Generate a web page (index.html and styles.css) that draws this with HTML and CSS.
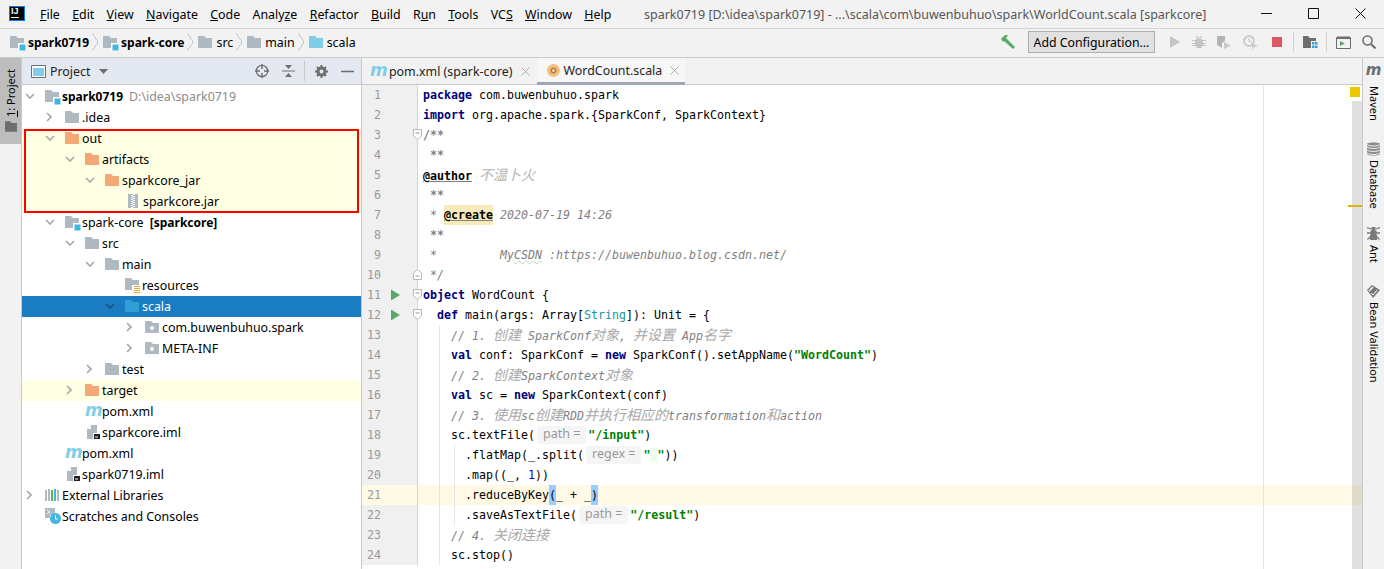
FILE: index.html
```html
<!DOCTYPE html>
<html lang="en">
<head>
    <meta charset="UTF-8">
    <title>WordCount.scala - spark0719</title>
    <link rel="stylesheet" href="styles.css">
</head>
<body>
    <svg class="defs" width="0" height="0">
        <symbol id="folder" viewBox="0 0 14 12"><path d="M0 0H6L8 2H14V12H0Z"/></symbol>
        <symbol id="module" viewBox="0 0 16 15">
            <path fill="#afb9c1" d="M0 0H6L8 2H14V12H0Z"/>
            <path fill="#fff" d="M8 7H16V15H8Z"/>
            <path fill="#40b6e0" d="M9.500 8.500H15.500V14.500H9.500Z"/>
        </symbol>
        <symbol id="down" viewBox="0 0 10 6"><path d="M1 1L5 5L9 1" fill="none" stroke-width="1.600"/></symbol>
        <symbol id="right" viewBox="0 0 6 10"><path d="M1 1L5 5L1 9" fill="none" stroke-width="1.600"/></symbol>
        <symbol id="iml" viewBox="0 0 14 15">
            <path fill="#afb9c1" d="M4 0H10V14H0V4Z"/>
            <path fill="#fff" d="M4 0V4H0Z"/>
            <path fill="#fff" d="M6 8H14V15H6Z"/>
            <path fill="#231f20" d="M7 9H13V14H7Z"/>
            <path fill="#fff" d="M8 11.500H11V12.500H8Z"/>
        </symbol>
        <symbol id="run" viewBox="0 0 10 12"><path d="M0 0L10 6L0 12Z"/></symbol>
        <symbol id="fold-open" viewBox="0 0 9 11"><path fill="#fff" stroke="#b8b8b8" d="M.5.500H8.500V7L4.500 10.500L.5 7Z"/><path stroke="#999" d="M2.500 4H6.500"/></symbol>
        <symbol id="fold-end" viewBox="0 0 9 11"><path fill="#fff" stroke="#b8b8b8" d="M.5 10.500H8.500V4L4.500 .5L.5 4Z"/><path stroke="#999" d="M2.500 7H6.500"/></symbol>
        <symbol id="close" viewBox="0 0 9 9"><path d="M.5.500L8.500 8.500M8.500.5L.5 8.500" fill="none"/></symbol>
    </svg>

    <div class="titlebar">
        <div class="app-logo"><span>IJ</span></div>
        <div class="menu">
            <span><u>F</u>ile</span>
            <span><u>E</u>dit</span>
            <span><u>V</u>iew</span>
            <span><u>N</u>avigate</span>
            <span><u>C</u>ode</span>
            <span>Analy<u>z</u>e</span>
            <span><u>R</u>efactor</span>
            <span><u>B</u>uild</span>
            <span>R<u>u</u>n</span>
            <span><u>T</u>ools</span>
            <span>VC<u>S</u></span>
            <span><u>W</u>indow</span>
            <span><u>H</u>elp</span>
        </div>
        <div class="window-title">spark0719 [D:\idea\spark0719] - ...\scala\com\buwenbuhuo\spark\WorldCount.scala [sparkcore]</div>
        <div class="window-btns">
            <svg width="11" height="11" viewBox="0 0 11 11"><path d="M0 5.500H11" stroke="#111"/></svg>
            <svg width="11" height="11" viewBox="0 0 11 11"><path d="M.5.500H10.500V10.500H.5Z" fill="none" stroke="#111"/></svg>
            <svg width="11" height="11" viewBox="0 0 11 11"><path d="M.5.500L10.500 10.500M10.500.5L.5 10.500" fill="none" stroke="#111"/></svg>
        </div>
    </div>

    <div class="navbar">
        <div class="crumbs">
            <svg class="ico-mod"><use href="#module"/></svg><b>spark0719</b><i class="sep"></i>
            <svg class="ico-mod"><use href="#module"/></svg><b>spark-core</b><i class="sep"></i>
            <svg class="ico gray"><use href="#folder"/></svg><span>src</span><i class="sep"></i>
            <svg class="ico gray"><use href="#folder"/></svg><span>main</span><i class="sep"></i>
            <svg class="ico blue"><use href="#folder"/></svg><span>scala</span>
        </div>
        <div class="tools">
            <svg class="t-hammer" width="16" height="14" viewBox="0 0 16 14"><path d="M1 4L5 0H8L6 3L15 12L13 14L4 6L3 7Z" fill="#59a869"/></svg>
            <button class="config">Add Configuration...</button>
            <svg class="t-play" width="12" height="14" viewBox="0 0 12 14"><path d="M1 1L11 7L1 13Z" fill="#c4c4c4"/></svg>
            <svg class="t-bug" width="14" height="14" viewBox="0 0 14 14"><path d="M4 4H10V5H14V6H11V8H14V9H11V10H14V11H10L9 13H5L4 11H0V10H3V9H0V8H3V6H0V5H4ZM5 1L7 3L9 1L10 2L9 3.500H5L4 2Z" fill="#c4c4c4"/></svg>
            <svg class="t-cover" width="15" height="14" viewBox="0 0 15 14"><path d="M0 1H8V6L5 8V13L0 10Z" fill="#b4b4b4"/><path d="M7 7L14 10.500L7 14Z" fill="#c8c8c8"/></svg>
            <svg class="t-prof" width="15" height="15" viewBox="0 0 15 15"><circle cx="6" cy="6" r="5" fill="none" stroke="#c0c0c0" stroke-width="1.500"/><path d="M6 3V6.500H9" fill="none" stroke="#c0c0c0"/><path d="M8 8L15 11L11 12L10 15Z" fill="#c8c8c8"/></svg>
            <span class="t-stop"></span>
            <span class="t-sep"></span>
            <svg class="t-struct" width="15" height="14" viewBox="0 0 15 14"><path d="M0 1H5L7 3H13V6H8V13H0Z" fill="#6e6e6e"/><path d="M9 7H11.500V9.500H9ZM12 7H14.500V9.500H12ZM9 10.500H11.500V13H9ZM12 10.500H14.500V13H12Z" fill="#389fd6"/></svg>
            <span class="t-sep"></span>
            <svg class="t-term" width="15" height="13" viewBox="0 0 15 13"><path d="M.5 1.500H14.500V12.500H.5Z" fill="none" stroke="#6e6e6e"/><path d="M1 .5H14V3H1Z" fill="#6e6e6e"/><path d="M4 5L9 7.500L4 10Z" fill="#59a869"/></svg>
            <svg class="t-search" width="14" height="14" viewBox="0 0 14 14"><circle cx="5.500" cy="5.500" r="4.500" fill="none" stroke="#6e6e6e" stroke-width="1.600"/><path d="M9 9L13.500 13.500" stroke="#6e6e6e" stroke-width="2"/></svg>
        </div>
    </div>

    <div class="workspace">
        <div class="strip strip-left">
            <div class="strip-tab">
                <span class="vtext"><u>1</u>: Project</span>
                <svg class="strip-folder" width="12" height="11" viewBox="0 0 14 12"><path d="M0 0H6L8 2H14V12H0Z" fill="#6e6e6e"/></svg>
            </div>
        </div>

        <div class="project">
            <div class="project-head">
                <svg class="head-ico" width="15" height="13" viewBox="0 0 15 13"><path d="M.5.500H14.500V12.500H.5Z" fill="#fff" stroke="#6e6e6e"/><path d="M2 3H13V11H2Z" fill="#7fcde8"/></svg>
                <span class="head-title">Project</span>
                <svg class="head-caret" width="9" height="5" viewBox="0 0 9 5"><path d="M0 0H9L4.500 5Z" fill="#6e6e6e"/></svg>
                <div class="head-tools">
                    <svg width="14" height="14" viewBox="0 0 14 14"><circle cx="7" cy="7" r="5.700" fill="none" stroke="#6e6e6e" stroke-width="1.300"/><path d="M7 0V5M7 9V14M0 7H5M9 7H14" stroke="#6e6e6e" stroke-width="1.500"/></svg>
                    <svg width="13" height="14" viewBox="0 0 13 14"><path d="M0 7H13" stroke="#6e6e6e"/><path d="M3 1H10L6.500 5ZM3 13H10L6.500 9Z" fill="#6e6e6e"/></svg>
                    <span class="head-sep"></span>
                    <svg width="13" height="13" viewBox="0 0 13 13"><circle cx="6.500" cy="6.500" r="3.500" fill="none" stroke="#6e6e6e" stroke-width="3"/><path d="M6.500 0V3M6.500 10V13M0 6.500H3M10 6.500H13M2 2L4 4M9 9L11 11M11 2L9 4M4 9L2 11" stroke="#6e6e6e" stroke-width="2"/></svg>
                    <svg width="13" height="13" viewBox="0 0 13 13"><path d="M0 6.500H13" stroke="#6e6e6e" stroke-width="1.500"/></svg>
                </div>
            </div>

            <div class="tree">
                <div class="row lv0"><svg class="arr"><use href="#down"/></svg><svg class="ico-mod"><use href="#module"/></svg><b>spark0719</b><span class="path">D:\idea\spark0719</span></div>
                <div class="row lv1"><svg class="arr-r"><use href="#right"/></svg><svg class="ico gray"><use href="#folder"/></svg><span>.idea</span></div>
                <div class="excluded">
                    <div class="row lv1"><svg class="arr"><use href="#down"/></svg><svg class="ico orange"><use href="#folder"/></svg><span>out</span></div>
                    <div class="row lv2"><svg class="arr"><use href="#down"/></svg><svg class="ico orange"><use href="#folder"/></svg><span>artifacts</span></div>
                    <div class="row lv3"><svg class="arr"><use href="#down"/></svg><svg class="ico orange"><use href="#folder"/></svg><span>sparkcore_jar</span></div>
                    <div class="row lv4"><i class="arr-none"></i>
                        <svg class="ico-jar" width="10" height="14" viewBox="0 0 10 14"><path d="M0 0H10V14H0Z" fill="#afb9c1"/><path d="M5 0H7V1H5ZM3 1H5V2H3ZM5 2H7V3H5ZM3 3H5V4H3ZM5 4H7V5H5ZM3 5H5V6H3ZM5 6H7V7H5ZM3 7H5V8H3ZM5 8H7V9H5ZM3 9H5V10H3ZM5 10H7V11H5ZM3 11H5V12H3ZM5 12H7V13H5ZM3 13H5V14H3Z" fill="#fff"/></svg>
                        <span>sparkcore.jar</span></div>
                </div>
                <div class="row lv1"><svg class="arr"><use href="#down"/></svg><svg class="ico-mod"><use href="#module"/></svg><span>spark-core <b class="facet">[sparkcore]</b></span></div>
                <div class="row lv2"><svg class="arr"><use href="#down"/></svg><svg class="ico gray"><use href="#folder"/></svg><span>src</span></div>
                <div class="row lv3"><svg class="arr"><use href="#down"/></svg><svg class="ico gray"><use href="#folder"/></svg><span>main</span></div>
                <div class="row lv4"><i class="arr-none"></i>
                    <svg class="ico-res" width="15" height="15" viewBox="0 0 15 15"><path d="M0 0H6L8 2H14V12H0Z" fill="#afb9c1"/><path d="M7 7H15V15H7Z" fill="#fff"/><path d="M9 8H15V9H9ZM9 10H15V11H9ZM9 12H15V13H9ZM9 14H15V15H9Z" fill="#f0a732"/></svg>
                    <span>resources</span></div>
                <div class="row lv4 selected"><svg class="arr dark"><use href="#down"/></svg><svg class="ico sel-blue"><use href="#folder"/></svg><span>scala</span></div>
                <div class="row lv5"><svg class="arr-r"><use href="#right"/></svg>
                    <svg class="ico gray pkg" viewBox="0 0 14 12"><path d="M0 0H6L8 2H14V12H0Z"/><circle cx="7" cy="7" r="2" fill="#fff"/></svg>
                    <span>com.buwenbuhuo.spark</span></div>
                <div class="row lv5"><svg class="arr-r"><use href="#right"/></svg>
                    <svg class="ico gray pkg" viewBox="0 0 14 12"><path d="M0 0H6L8 2H14V12H0Z"/><circle cx="7" cy="7" r="2" fill="#fff"/></svg>
                    <span>META-INF</span></div>
                <div class="row lv3"><svg class="arr-r"><use href="#right"/></svg><svg class="ico gray"><use href="#folder"/></svg><span>test</span></div>
                <div class="row lv2 excluded-row"><svg class="arr-r"><use href="#right"/></svg><svg class="ico orange"><use href="#folder"/></svg><span>target</span></div>
                <div class="row lv2"><i class="arr-none"></i><em class="m-ico">m</em><span>pom.xml</span></div>
                <div class="row lv2"><i class="arr-none"></i><svg class="ico-iml"><use href="#iml"/></svg><span>sparkcore.iml</span></div>
                <div class="row lv1"><i class="arr-none"></i><em class="m-ico">m</em><span>pom.xml</span></div>
                <div class="row lv1"><i class="arr-none"></i><svg class="ico-iml"><use href="#iml"/></svg><span>spark0719.iml</span></div>
                <div class="row lv0"><svg class="arr-r"><use href="#right"/></svg>
                    <svg class="ico-lib" width="15" height="12" viewBox="0 0 15 12"><path d="M0 1H2V12H0Z" fill="#afb9c1"/><path d="M3 0H5V12H3Z" fill="#afb9c1"/><path d="M6 1H8V12H6Z" fill="#62b543"/><path d="M9 0H11V12H9Z" fill="#40b6e0"/><path d="M12 1H14V12H12Z" fill="#afb9c1"/></svg>
                    <span>External Libraries</span></div>
                <div class="row lv0"><i class="arr-none arr-wide"></i>
                    <svg class="ico-scr" width="16" height="16" viewBox="0 0 16 16"><path d="M0 0H10V7H5V10H0Z" fill="#afb9c1"/><path d="M2 2L5 4L2 6" fill="none" stroke="#fff"/><circle cx="10.500" cy="10.500" r="5.500" fill="#40b6e0"/><path d="M10.500 7.500V11H13" fill="none" stroke="#fff"/></svg>
                    <span>Scratches and Consoles</span></div>
            </div>
        </div>

        <div class="editor">
            <div class="tabs">
                <div class="tab"><em class="m-ico">m</em><span>pom.xml (spark-core)</span><svg class="tab-x"><use href="#close"/></svg></div>
                <div class="tab active">
                    <svg class="scala-ico" width="13" height="13" viewBox="0 0 13 13"><circle cx="6.500" cy="6.500" r="6.500" fill="#f4bf75"/><circle cx="6.500" cy="6.500" r="2.500" fill="none" stroke="#6b6b6b"/></svg>
                    <span>WordCount.scala</span><svg class="tab-x"><use href="#close"/></svg></div>
            </div>
            <div class="code-area">
                <div class="line"><div class="gut"><span class="no">1</span></div><code><b class="kw">package</b> com.buwenbuhuo.spark</code></div>
                <div class="line"><div class="gut"><span class="no">2</span></div><code><b class="kw">import</b> org.apache.spark.{SparkConf, SparkContext}</code></div>
                <div class="line"><div class="gut"><span class="no">3</span><svg class="fold"><use href="#fold-open"/></svg></div><code class="doc"><b>/**</b></code></div>
                <div class="line"><div class="gut"><span class="no">4</span></div><code class="doc"><b> **</b></code></div>
                <div class="line"><div class="gut"><span class="no">5</span></div><code class="doc"><b class="tag">@author</b> <span class="cjk light">不温卜火</span></code></div>
                <div class="line"><div class="gut"><span class="no">6</span></div><code class="doc"><b> **</b></code></div>
                <div class="line"><div class="gut"><span class="no">7</span></div><code class="doc"> * <b class="tag todo">@create</b> 2020-07-19 14:26</code></div>
                <div class="line"><div class="gut"><span class="no">8</span></div><code class="doc"><b> **</b></code></div>
                <div class="line"><div class="gut"><span class="no">9</span></div><code class="doc"> *         My<span class="typo">CSDN</span> :https://buwenbuhuo.blog.csdn.net/</code></div>
                <div class="line"><div class="gut"><span class="no">10</span><svg class="fold"><use href="#fold-end"/></svg></div><code class="doc"> */</code></div>
                <div class="line"><div class="gut"><span class="no">11</span><svg class="gut-run"><use href="#run"/></svg><svg class="fold"><use href="#fold-open"/></svg></div><code><b class="kw">object</b> WordCount {</code></div>
                <div class="line"><div class="gut"><span class="no">12</span><svg class="gut-run"><use href="#run"/></svg><svg class="fold"><use href="#fold-open"/></svg></div><code>  <b class="kw">def</b> main(args: Array[<span class="type">String</span>]): Unit = {</code></div>
                <div class="line"><div class="gut"><span class="no">13</span></div><code class="cmt">    // 1. <span class="cjk">创建</span> SparkConf<span class="cjk">对象</span>, <span class="cjk">并设置</span> App<span class="cjk">名字</span></code></div>
                <div class="line"><div class="gut"><span class="no">14</span></div><code>    <b class="kw">val</b> conf: SparkConf = <b class="kw">new</b> SparkConf().setAppName(<b class="str">"WordCount"</b>)</code></div>
                <div class="line"><div class="gut"><span class="no">15</span></div><code class="cmt">    // 2. <span class="cjk">创建</span>SparkContext<span class="cjk">对象</span></code></div>
                <div class="line"><div class="gut"><span class="no">16</span></div><code>    <b class="kw">val</b> sc = <b class="kw">new</b> SparkContext(conf)</code></div>
                <div class="line"><div class="gut"><span class="no">17</span></div><code class="cmt">    // 3. <span class="cjk">使用</span>sc<span class="cjk">创建</span>RDD<span class="cjk">并执行相应的</span>transformation<span class="cjk">和</span>action</code></div>
                <div class="line"><div class="gut"><span class="no">18</span></div><code>    sc.textFile(<span class="hint">path =</span><b class="str">"/input"</b>)</code></div>
                <div class="line"><div class="gut"><span class="no">19</span></div><code>      .flatMap(_.split(<span class="hint">regex =</span><b class="str">"<span class="esc"> </span>"</b>))</code></div>
                <div class="line"><div class="gut"><span class="no">20</span></div><code>      .map((_, <span class="num">1</span>))</code></div>
                <div class="line current"><div class="gut"><span class="no">21</span></div><code>      .reduceByKey<span class="brace">(</span>_ + _<span class="brace">)</span></code></div>
                <div class="line"><div class="gut"><span class="no">22</span></div><code>      .saveAsTextFile(<span class="hint">path =</span><b class="str">"/result"</b>)</code></div>
                <div class="line"><div class="gut"><span class="no">23</span></div><code class="cmt">    // 4. <span class="cjk">关闭连接</span></code></div>
                <div class="line"><div class="gut"><span class="no">24</span></div><code>    sc.stop()</code></div>

                <!-- overlays on the text area -->
                <span class="guide guide-a"></span>
                <span class="guide guide-b"></span>
                <span class="margin-line"></span>
                <span class="scroll-track"></span>
                <span class="err-box"></span>
                <span class="err-mark"></span>
            </div>
        </div>

        <div class="strip strip-right">
            <em class="m-side">m</em>
            <span class="vtext maven">Maven</span>
            <svg class="side-ico side-db" width="13" height="14" viewBox="0 0 13 14"><path d="M0 2C0 0 13 0 13 2V12C13 14 0 14 0 12Z" fill="#8c8c8c"/><path d="M0 5C3 7 10 7 13 5M0 8C3 10 10 10 13 8M0 11C3 13 10 13 13 11M0 2.500C3 4.500 10 4.500 13 2.500" fill="none" stroke="#f2f2f2"/></svg>
            <span class="vtext">Database</span>
            <svg class="side-ico side-ant" width="13" height="13" viewBox="0 0 13 13"><path d="M4.500 0H8.500V3.500H4.500ZM3.500 3.500H9.500V8H3.500ZM3 8H10V13H3Z" fill="#7a7a7a"/><path d="M4 2L0 .5M9 2L13 .5M4 6H0M9 6H13M4 9L.5 12.500M9 9L12.500 12.500" stroke="#7a7a7a" stroke-width="1.300"/></svg>
            <span class="vtext">Ant</span>
            <svg class="side-ico side-bean" width="13" height="13" viewBox="0 0 13 13"><path d="M0 5L5 0L13 5L6 13Z" fill="#777"/><path d="M2 6L6 2" stroke="#fff" stroke-width="1.500"/><path d="M4 8L6 10L10 5" fill="none" stroke="#fff"/></svg>
            <span class="vtext">Bean Validation</span>
        </div>
    </div>
</body>
</html>
```

FILE: styles.css
```css
* {
    box-sizing: border-box;
}

html, body {
    margin: 0;
    height: 569px;
    overflow: hidden;
}

body {
    font-family: "Noto Sans", "Noto Sans CJK SC", sans-serif;
    font-size: 12.4px;
    color: #000;
    background-color: #f2f2f2;
}

b {
    font-size: 12px;
}

.defs {
    position: absolute;
}

svg {
    flex: none;
    display: block;
}

/* Title bar */
.titlebar {
    display: flex;
    align-items: center;
    height: 29px;
    padding-left: 9px;
    border-bottom: 1px solid #d4d4d4;
}

.app-logo {
    width: 16px;
    height: 15px;
    margin-top: -2px;
    background-color: #000;
    border: 1px solid #087cfa;
    color: #fff;
    font: bold 9px/9px "Liberation Sans", sans-serif;
    padding-left: 1px;
}

.app-logo span {
    display: block;
    width: 8px;
    height: 11px;
    border-bottom: 1px solid #fff;
}

.menu {
    display: flex;
    gap: 12.3px;
    margin-left: 15px;
}

.window-title {
    position: absolute;
    left: 644px;
    top: 6px;
    font-size: 12.5px;
    color: #555;
}

.window-btns {
    display: flex;
    gap: 36px;
    margin-left: auto;
    margin-right: 18px;
    margin-top: -1px;
}

/* Navigation bar */
.navbar {
    display: flex;
    align-items: center;
    height: 29px;
    padding: 0 0 2px 10px;
    border-bottom: 1px solid #c9c9c9;
}

.crumbs {
    display: flex;
    align-items: center;
}

.crumbs .ico-mod {
    margin-right: 2px;
}

.crumbs .ico {
    margin-right: 4px;
}

.sep {
    width: 6px;
    height: 18px;
    margin: 0 5px 0 3px;
    background: linear-gradient(to top right, transparent 47%, #c8c8c8 47%, #c8c8c8 56%, transparent 56%) top / 100% 50% no-repeat,
                linear-gradient(to bottom right, transparent 47%, #c8c8c8 47%, #c8c8c8 56%, transparent 56%) bottom / 100% 50% no-repeat;
}

.tools {
    display: flex;
    align-items: center;
    margin-left: auto;
    margin-right: 8px;
}

.config {
    width: 127px;
    height: 22px;
    margin: 0 14px 0 1px;
    padding: 0;
    background-color: #e1e1e1;
    border: 1px solid #adadad;
    font: 12.3px "Noto Sans", sans-serif;
    color: #000;
}

.tools svg {
    margin-right: 11px;
}

.tools .t-struct {
    margin-right: 8px;
}

.t-stop {
    width: 10px;
    height: 10px;
    margin: 0 11px 0 3px;
    background-color: #db5860;
}

.t-sep {
    width: 1px;
    height: 20px;
    margin-right: 9px;
    background-color: #d1d1d1;
}

.tools .t-search {
    margin-right: 0;
}

/* Main area */
.workspace {
    display: flex;
    height: 511px;
}

.strip {
    flex: none;
    width: 22px;
}

.strip-left {
    border-right: 1px solid #c9c9c9;
}

.strip-right {
    display: flex;
    flex-direction: column;
    align-items: center;
    padding-top: 6px;
    border-left: 1px solid #c9c9c9;
    font-size: 11px;
}

.vtext {
    writing-mode: vertical-rl;
    line-height: 16px;
}

.strip-tab {
    display: flex;
    flex-direction: column;
    align-items: center;
    height: 86px;
    padding-top: 11px;
    background-color: #bdbdbd;
    font-size: 11px;
}

.strip-tab .vtext {
    transform: rotate(180deg);
}

.strip-folder {
    margin-top: 4px;
}

.m-side {
    font: italic bold 15px/13px "DejaVu Sans", sans-serif;
    color: #6e6e6e;
}

.maven {
    margin-top: 9px;
}

.side-db {
    margin: 21px 0 4px;
}

.side-ant {
    margin: 18px 0 5px;
}

.side-bean {
    margin: 23px 0 4px;
}

/* Project panel */
.project {
    flex: none;
    width: 340px;
    background-color: #fff;
    border-right: 1px solid #c9c9c9;
}

.project-head {
    display: flex;
    align-items: center;
    height: 27px;
    padding-left: 9px;
    background-color: #e4e8f0;
    border-bottom: 1px solid #c9c9c9;
}

.head-title {
    margin-left: 4px;
    color: #222;
}

.head-caret {
    margin-left: 9px;
}

.head-tools {
    display: flex;
    align-items: center;
    gap: 13px;
    margin-left: auto;
    margin-right: 7px;
}

.head-sep {
    width: 1px;
    height: 20px;
    margin: 0 -3px 0 -4px;
    background-color: #c9c9c9;
}

.tree {
    padding-top: 1px;
}

.row {
    display: flex;
    align-items: center;
    height: 21px;
    padding-bottom: 1px;
    white-space: nowrap;
}

.lv0 { padding-left: 4px; }
.lv1 { padding-left: 24px; }
.lv2 { padding-left: 44px; }
.lv3 { padding-left: 64px; }
.lv4 { padding-left: 84px; }
.lv5 { padding-left: 104px; }

.arr {
    width: 10px;
    height: 6px;
    margin: 0 10px 0 -1px;
    stroke: #a3a8ad;
}

.arr.dark {
    stroke: #1d4f77;
}

.arr-r {
    width: 6px;
    height: 10px;
    margin: 0 13px 0 0;
    stroke: #a3a8ad;
}

.arr-none {
    width: 19px;
    flex: none;
}

.ico {
    width: 14px;
    height: 12px;
    margin-right: 3px;
}

.pkg {
    margin-right: 3px;
}

.gray { fill: #afb9c1; }
.blue { fill: #7fcde8; }
.orange { fill: #f4a876; }
.sel-blue { fill: #2f9fd6; }

.ico-mod {
    width: 16px;
    height: 15px;
    margin-right: 1px;
    margin-top: 2px;
}

.ico-jar {
    margin: 0 5px 0 3px;
}

.ico-res {
    margin-right: 2px;
}

.ico-iml {
    width: 14px;
    height: 15px;
    margin: 0 1px 0 2px;
}

.ico-lib {
    margin-right: 2px;
}

.ico-scr {
    margin-right: 1px;
}

.path {
    margin-left: 6px;
    color: #8c8c8c;
}

.facet {
    margin-left: 3px;
}

.excluded, .excluded-row {
    background-color: #ffffe4;
}

.excluded {
    position: relative;
}

/* red annotation round the out folder */
.excluded::after {
    content: "";
    position: absolute;
    left: 2px;
    right: 2px;
    top: 1px;
    bottom: -1px;
    border: 2px solid #f00;
}

.selected {
    background-color: #1a7dc4;
    color: #fff;
}

.m-ico {
    width: 17px;
    flex: none;
    font: italic bold 17px/16px "DejaVu Sans", sans-serif;
    color: #7fcde8;
    letter-spacing: -1px;
    margin-top: -3px;
}

/* Editor */
.editor {
    flex: none;
    width: 1000px;
    display: flex;
    flex-direction: column;
}

.tabs {
    display: flex;
    height: 27px;
    border-bottom: 1px solid #c9c9c9;
}

.tab {
    display: flex;
    align-items: center;
    padding: 0 7px 0 8px;
    color: #222;
}

.tab .m-ico {
    margin-top: -3px;
    margin-right: 2px;
}

.tab-x {
    width: 9px;
    height: 9px;
    margin-left: 8px;
    stroke: #b0b0b0;
}

.tab.active {
    height: 27px;
    padding: 0 6px 0 10px;
    background-color: #f7f7f7;
    border-bottom: 3px solid #9ca7b8;
}

.scala-ico {
    margin-right: 4px;
    margin-top: 1px;
}

.code-area {
    position: relative;
    flex: 1;
    background-color: #fff;
    overflow: hidden;
}

.line {
    display: flex;
    height: 20px;
    font: 11.63px/20px "DejaVu Sans Mono", monospace;
}

.line b {
    font-size: inherit;
}

.gut {
    position: relative;
    flex: none;
    width: 56px;
    background-color: #f0f0f0;
    border-right: 1px solid #d5d5d5;
}

.no {
    display: block;
    width: 19px;
    text-align: right;
    color: #999;
}

.gut-run {
    position: absolute;
    left: 29px;
    top: 4px;
    width: 9px;
    height: 12px;
    fill: #59a869;
}

.fold {
    position: absolute;
    left: 51px;
    top: 4px;
    width: 9px;
    height: 11px;
}

code {
    flex: 1;
    padding-left: 5px;
    font: inherit;
    color: #000;
    white-space: pre;
}

.kw {
    color: #000080;
}

.str {
    color: #008000;
}

.esc {
    background-color: #edfced;
}

.num {
    color: #0000ff;
}

.type {
    color: #20999d;
}

.cmt {
    color: #808080;
    font-style: italic;
}

.doc {
    color: #808080;
    font-style: italic;
}

.doc b {
    font-style: normal;
}

.tag {
    color: #000;
    text-decoration: underline;
    text-decoration-color: #808080;
}

.todo {
    background-color: #f7ebbb;
    display: inline-block;
    height: 20px;
}

.typo {
    text-decoration: underline wavy #b5d9b5;
    text-decoration-thickness: 1px;
}

.cjk {
    font-family: "Noto Sans CJK SC", sans-serif;
    font-size: 14px;
    line-height: 18px;
    color: #a8a8a8;
}

.light {
    color: #b4b4b4;
}

.hint {
    display: inline-block;
    height: 18px;
    margin: 0 2px;
    padding: 0 6px;
    background-color: #f5f5f5;
    border-radius: 4px;
    color: #999;
    font: 12.5px/16px "Noto Sans", sans-serif;
    vertical-align: 1px;
}

.current {
    background-color: #fff9e5;
}

.current .gut {
    background-color: #fff9e5;
}

.brace {
    background-color: #99ccff;
    display: inline-block;
    height: 20px;
}

.guide {
    position: absolute;
    width: 1px;
    background-color: #e4e4e4;
}

.guide-a {
    left: 77px;
    top: 240px;
    height: 240px;
}

.guide-b {
    left: 92px;
    top: 360px;
    height: 80px;
}

.margin-line {
    position: absolute;
    left: 901px;
    top: 0;
    bottom: 0;
    width: 1px;
    background-color: #e4e4e4;
}

.scroll-track {
    position: absolute;
    left: 990px;
    top: 16px;
    bottom: 0;
    width: 10px;
    background-color: rgba(0, 0, 0, 0.12);
}

.err-box {
    position: absolute;
    left: 988px;
    top: 2px;
    width: 10px;
    height: 10px;
    background-color: #edc800;
}

.err-mark {
    position: absolute;
    left: 986px;
    top: 120px;
    width: 14px;
    height: 2px;
    background-color: #e0b500;
}
```
